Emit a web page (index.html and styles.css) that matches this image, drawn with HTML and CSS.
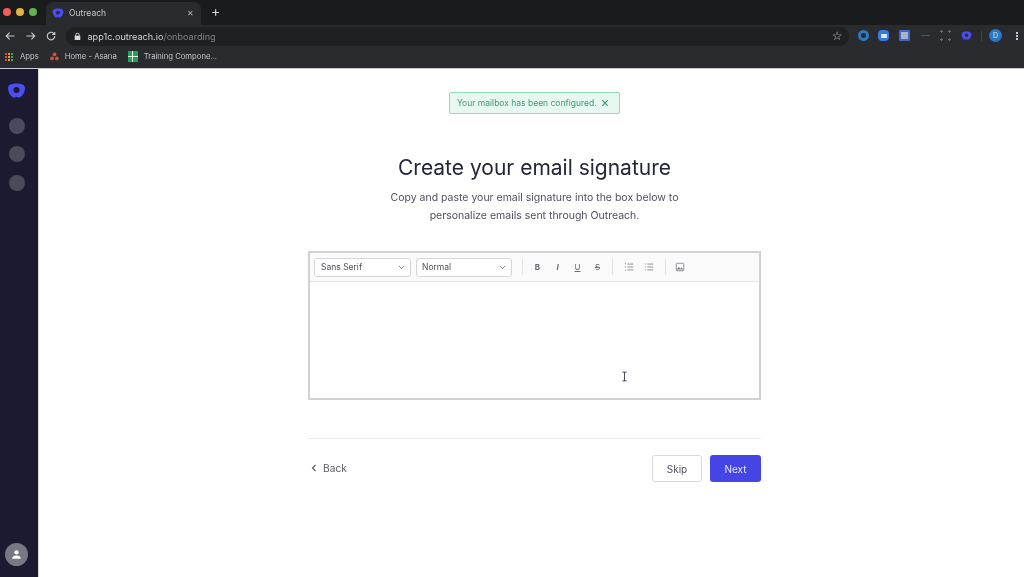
FILE: index.html
```html
<!DOCTYPE html>
<html lang="en">
<head>
  <meta charset="UTF-8" />
  <title>Outreach</title>
  <link rel="stylesheet" href="styles.css">
</head>
<body>
  <div class="browser">
    <div class="tabstrip">
      <div class="traffic">
        <span class="dot dot-red"></span>
        <span class="dot dot-yellow"></span>
        <span class="dot dot-green"></span>
      </div>
      <div class="tab">
        <svg class="tab-logo" viewBox="0 0 24 24"><path fill-rule="evenodd" fill="#4a4df0" d="M12 3c5 0 10 .8 10.700 5.500.6 4.500-3.700 12.500-7.700 12.500-1.200 0-1.800-.8-3-.8s-1.800.8-3 .8C5 21 .7 13 1.300 8.500 2 3.800 7 3 12 3zm0 4.500a3.800 3.800 0 1 0 0 7.600 3.800 3.800 0 0 0 0-7.600z"/></svg>
        <span class="tab-title">Outreach</span>
        <span class="tab-close">✕</span>
      </div>
      <span class="new-tab">+</span>
    </div>

    <div class="toolbar">
      <svg class="nav-icon" viewBox="0 0 16 16"><path d="M14 8H3M7.500 3.500 3 8l4.500 4.500" /></svg>
      <svg class="nav-icon" viewBox="0 0 16 16"><path d="M2 8h11M8.500 3.500 13 8l-4.500 4.500" /></svg>
      <svg class="nav-icon" viewBox="0 0 16 16"><path d="M13 8a5 5 0 1 1-1.500-3.500L13 6M13 2.500V6H9.500" /></svg>
      <div class="omnibox">
        <svg class="lock" viewBox="0 0 10 12"><path fill="#d8d9db" d="M2 5V3.500a3 3 0 0 1 6 0V5h1v6H1V5zm1.300 0h3.400V3.500a1.700 1.700 0 0 0-3.400 0z"/></svg>
        <span class="url-host">app1c.outreach.io</span><span class="url-path">/onboarding</span>
        <span class="star">☆</span>
      </div>
      <div class="extensions">
        <span class="ext ext-ring"></span>
        <span class="ext ext-zoom"></span>
        <span class="ext ext-cal"></span>
        <span class="ext ext-dash"></span>
        <span class="ext ext-dots"></span>
        <svg class="ext-logo" viewBox="0 0 24 24"><path fill-rule="evenodd" fill="#4a4df0" d="M12 3c5 0 10 .8 10.700 5.500.6 4.500-3.700 12.500-7.700 12.500-1.200 0-1.800-.8-3-.8s-1.800.8-3 .8C5 21 .7 13 1.300 8.500 2 3.800 7 3 12 3zm0 4.500a3.800 3.800 0 1 0 0 7.600 3.800 3.800 0 0 0 0-7.600z"/></svg>
        <span class="ext-sep"></span>
        <span class="avatar">D</span>
        <span class="kebab"><i></i><i></i><i></i></span>
      </div>
    </div>

    <div class="bookmarks">
      <span class="bookmark"><span class="apps-grid"></span>Apps</span>
      <span class="bookmark"><svg class="asana" viewBox="0 0 12 12"><circle cx="6" cy="3" r="2.500"/><circle cx="2.800" cy="8.500" r="2.500"/><circle cx="9.200" cy="8.500" r="2.500"/></svg>Home - Asana</span>
      <span class="bookmark"><span class="sheet"></span>Training Compone...</span>
    </div>
  </div>

  <div class="app">
    <nav class="sidebar">
      <svg class="side-logo" viewBox="0 0 24 24"><path fill-rule="evenodd" fill="#4a4df0" d="M12 3c5 0 10 .8 10.700 5.500.6 4.500-3.700 12.500-7.700 12.500-1.200 0-1.800-.8-3-.8s-1.800.8-3 .8C5 21 .7 13 1.300 8.500 2 3.800 7 3 12 3zm0 4.500a3.800 3.800 0 1 0 0 7.600 3.800 3.800 0 0 0 0-7.600z"/></svg>
      <span class="side-dot"></span>
      <span class="side-dot"></span>
      <span class="side-dot"></span>
      <span class="side-user">
        <svg viewBox="0 0 24 24"><circle cx="12" cy="8" r="4" fill="#fff"/><path fill="#fff" d="M4 20c0-4 4-6 8-6s8 2 8 6z"/></svg>
      </span>
    </nav>

    <main class="content">
      <div class="column">
        <div class="notice">
          <span>Your mailbox has been configured.</span>
          <svg class="notice-close" viewBox="0 0 10 10"><path d="M1.500 1.500l7 7M8.500 1.500l-7 7"/></svg>
        </div>

        <h1>Create your email signature</h1>
        <p class="intro">Copy and paste your email signature into the box below to<br>personalize emails sent through Outreach.</p>

        <div class="editor">
          <div class="editor-tools">
            <div class="select select-font">Sans Serif<svg viewBox="0 0 10 6"><path d="M1.500 1 5 4.500 8.500 1"/></svg></div>
            <div class="select select-size">Normal<svg viewBox="0 0 10 6"><path d="M1.500 1 5 4.500 8.500 1"/></svg></div>
            <span class="tool-sep sep-first"></span>
            <span class="tool tool-b">B</span>
            <span class="tool tool-i">I</span>
            <span class="tool tool-u">U</span>
            <span class="tool tool-s">S</span>
            <span class="tool-sep"></span>
            <svg class="tool-icon" viewBox="0 0 12 12"><path d="M4 2.500h7M4 6h7M4 9.500h7M1 2h1.200M1 6h1.200M1 10h1.200"/></svg>
            <svg class="tool-icon" viewBox="0 0 12 12"><path d="M4 2.500h7M4 6h7M4 9.500h7M1 2.500h1.200M1 6h1.200M1 9.500h1.200"/></svg>
            <span class="tool-sep sep-last"></span>
            <svg class="tool-icon" viewBox="0 0 12 12"><rect x="1.500" y="1.500" width="9" height="9" rx="1"/><path class="solid" d="M2 9l2.500-3 2 2 1.500-1.500L10 9z"/></svg>
          </div>
          <div class="editor-body">
            <svg class="ibeam" viewBox="0 0 8 12"><path d="M1.500 1h5M4 1v10M1.500 11h5"/></svg>
          </div>
        </div>

        <div class="actions">
          <a class="back"><svg viewBox="0 0 6 8"><path d="M4.500 1 1.500 4l3 3"/></svg>Back</a>
          <div class="actions-right">
            <button class="btn btn-skip">Skip</button>
            <button class="btn btn-next">Next</button>
          </div>
        </div>
      </div>
    </main>
  </div>
</body>
</html>
```

FILE: styles.css
```css
* { box-sizing: border-box; }

html, body {
  margin: 0;
  padding: 0;
  width: 100%;
  height: 100%;
  overflow: hidden;
  font-family: 'Inter', 'Liberation Sans', sans-serif;
  background: #fff;
}

body {
  display: flex;
  flex-direction: column;
  filter: blur(0.4px);
}

/* browser chrome */
.browser { flex: none; height: 69px; border-bottom: 1px solid #c9cacc; }

.tabstrip {
  height: 25px;
  background: #1a1b1d;
  display: flex;
  align-items: flex-end;
  padding-left: 3px;
}

.traffic { display: flex; gap: 5px; align-self: center; margin-top: -2px; }
.dot { width: 8px; height: 8px; border-radius: 50%; }
.dot-red { background: #ed5f58; }
.dot-yellow { background: #e2b23f; }
.dot-green { background: #5fb44b; }

.tab {
  width: 155px;
  height: 23px;
  margin-left: 9px;
  padding: 0 7px 2px 6px;
  background: #292b2e;
  border-radius: 7px 7px 0 0;
  display: flex;
  align-items: center;
}
.tab-logo { width: 12px; height: 12px; }
.tab-title { margin-left: 5px; font-size: 8.500px; color: #c7c8ca; flex: 1; }
.tab-close { font-size: 8px; color: #b5b6b8; }
.new-tab { margin: 0 0 3px 10px; align-self: center; font-size: 14px; line-height: 14px; color: #d5d6d8; }

.toolbar {
  height: 21px;
  background: #292b2e;
  display: flex;
  align-items: center;
  padding-left: 4px;
}
.nav-icon {
  width: 12px;
  height: 12px;
  margin-right: 8.500px;
  fill: none;
  stroke: #c9cacc;
  stroke-width: 1.500;
}
.omnibox {
  width: 783px;
  height: 19px;
  margin-top: 1px;
  padding: 0 6px 0 8px;
  background: #1f2023;
  border-radius: 10px;
  display: flex;
  align-items: center;
  font-size: 9.100px;
}
.lock { width: 7px; height: 9px; margin-right: 7px; }
.url-host { color: #d5d6d8; }
.url-path { color: #808285; }
.star { margin-left: auto; color: #c9cacc; font-size: 12px; font-family: 'DejaVu Sans', sans-serif; }

.extensions { flex: 1; display: flex; align-items: center; padding-left: 9px; }
.ext { width: 11px; height: 11px; margin-right: 9.700px; flex: none; }
.ext-ring { border: 3px solid #2b78c2; border-radius: 50%; }
.ext-zoom {
  border-radius: 4px;
  background: linear-gradient(#dce6f8, #dce6f8) center / 6px 4px no-repeat, #3a77e0;
}
.ext-cal {
  border: 2px solid #3f66c2;
  border-radius: 1px;
  background: #a9b2c6;
}
.ext-dash {
  background: linear-gradient(#7a4a30, #7a4a30) center / 9px 1px no-repeat;
}
.ext-dots {
  background:
    radial-gradient(circle, #3f8a45 1px, transparent 1.200px) 0 0 / 3px 3px no-repeat,
    radial-gradient(circle, #3f8a45 1px, transparent 1.200px) 100% 0 / 3px 3px no-repeat,
    radial-gradient(circle, #3f8a45 1px, transparent 1.200px) 0 100% / 3px 3px no-repeat,
    radial-gradient(circle, #3f8a45 1px, transparent 1.200px) 100% 100% / 3px 3px no-repeat;
}
.ext-logo { width: 11px; height: 11px; flex: none; }
.ext-sep { width: 1px; height: 10px; margin: 0 7px 0 9px; background: #44464a; }
.avatar {
  width: 13px;
  height: 13px;
  flex: none;
  border-radius: 50%;
  background: #2b78c2;
  color: #cfe3f6;
  font-size: 7px;
  text-align: center;
  line-height: 13px;
}
.kebab { margin-left: 14px; display: flex; flex-direction: column; gap: 1px; }
.kebab i { width: 2px; height: 2px; background: #c9cacc; }

.bookmarks {
  height: 22px;
  background: #292b2e;
  display: flex;
  align-items: center;
  padding: 0 0 2px 5px;
  font-size: 7.700px;
  color: #c4c5c7;
}
.bookmark { display: flex; align-items: center; margin-right: 11px; }
.apps-grid {
  width: 9px;
  height: 9px;
  margin-right: 6px;
  background:
    repeating-linear-gradient(0deg, transparent 0 2px, #292b2e 2px 3px),
    repeating-linear-gradient(90deg, #d9503f 0 2px, #292b2e 2px 3px, #e0a030 3px 5px, #292b2e 5px 6px, #4a9f50 6px 8px, #292b2e 8px 9px);
}
.asana { width: 9px; height: 9px; margin-right: 6px; fill: #d9503f; }
.sheet {
  width: 10px;
  height: 11px;
  margin-right: 6px;
  background:
    linear-gradient(#e8f5ec, #e8f5ec) center / 100% 1px no-repeat,
    linear-gradient(#e8f5ec, #e8f5ec) center / 1px 100% no-repeat,
    #23a35a;
}

/* app */
.app { flex: 1; display: flex; min-height: 0; }

.sidebar {
  width: 39px;
  flex: none;
  background: #1b1a30;
  display: flex;
  flex-direction: column;
  align-items: center;
  padding: 12px 5px 0 0;
  border-right: 1px solid #d8d8dc;
}
.side-logo { width: 19px; height: 19px; margin-bottom: 18px; }
.side-dot { width: 16px; height: 16px; border-radius: 50%; background: #4b495c; margin-bottom: 12.300px; }
.side-user {
  width: 23px;
  height: 23px;
  margin-top: auto;
  margin-bottom: 11px;
  border-radius: 50%;
  background: #787785;
  display: flex;
  align-items: center;
  justify-content: center;
}
.side-user svg { width: 13px; height: 13px; }

.content { flex: 1; padding-left: 269px; }
.column { width: 453px; display: flex; flex-direction: column; align-items: center; }

.notice {
  width: 171px;
  height: 22px;
  margin-top: 23px;
  padding: 0 10px 0 7px;
  background: #e6f8f0;
  border: 1px solid #8fdcb8;
  border-radius: 2px;
  display: flex;
  align-items: center;
  justify-content: space-between;
  font-size: 8.500px;
  color: #3b9a70;
  white-space: nowrap;
}
.notice-close { width: 8px; height: 8px; fill: none; stroke: #3b9a70; stroke-width: 1.500; }

h1 {
  margin: 39px 0 0;
  font-size: 21px;
  line-height: 30px;
  font-weight: 400;
  color: #24253a;
  white-space: nowrap;
}

.intro {
  margin: 6px 0 0;
  font-size: 10.500px;
  line-height: 18px;
  color: #4d4e60;
  text-align: center;
}

.editor {
  width: 100%;
  height: 149px;
  margin-top: 26px;
  border: 2px solid #d0d0d6;
  display: flex;
  flex-direction: column;
}
.editor-tools {
  height: 29px;
  padding: 0 4px;
  border-bottom: 1px solid #e6e6ea;
  display: flex;
  align-items: center;
  background: #fafafb;
  flex: none;
}
.select {
  height: 19px;
  padding: 0 5px 0 6px;
  border: 1px solid #d5d5da;
  border-radius: 3px;
  background: #fff;
  display: flex;
  align-items: center;
  justify-content: space-between;
  font-size: 8.500px;
  color: #4d4e60;
}
.select svg { width: 7px; height: 5px; fill: none; stroke: #5c5d6e; stroke-width: 1.200; }
.select-font { width: 97px; margin-right: 5px; }
.select-size { width: 96px; padding-left: 5px; }
.tool-sep { width: 1px; height: 16px; margin: 0 6px 0 6px; background: #e4e4e8; }
.sep-first { margin-left: 10px; margin-right: 10px; }
.sep-last { margin-right: 4px; }
.tool { width: 9px; margin-right: 11px; text-align: center; font-size: 8px; line-height: 10px; color: #6a6b78; }
.tool-b { font-weight: 700; }
.tool-i { font-style: italic; font-weight: 700; }
.tool-u { text-decoration: underline; }
.tool-s { text-decoration: line-through; margin-right: 4px; }
.tool-icon {
  width: 10px;
  height: 10px;
  margin: 0 5px;
  fill: none;
  stroke: #7a7b88;
  stroke-width: 1;
}
.tool-icon .solid { fill: #7a7b88; stroke: none; }

.editor-body { flex: 1; position: relative; background: #fff; }
.ibeam {
  position: absolute;
  left: 311px;
  top: 89px;
  width: 7px;
  height: 11px;
  fill: none;
  stroke: #33343f;
  stroke-width: 1;
}

.actions {
  width: 100%;
  margin-top: 38px;
  padding-top: 16px;
  border-top: 1px solid #ececef;
  display: flex;
  align-items: center;
  justify-content: space-between;
}
.back { display: flex; align-items: center; font-size: 10.200px; color: #5a5b6a; padding: 0 0 2px 3px; }
.back svg { width: 6px; height: 8px; margin-right: 6px; fill: none; stroke: #5a5b6a; stroke-width: 1.200; }
.actions-right { display: flex; gap: 8px; }
.btn {
  height: 27px;
  border-radius: 3px;
  font-family: inherit;
  font-size: 10px;
  padding: 0;
}
.btn-skip { width: 50px; background: #fff; border: 1px solid #d8d8dc; color: #4d4e60; }
.btn-next { width: 51px; background: #4545e6; border: none; color: #e4e4fb; }
```
